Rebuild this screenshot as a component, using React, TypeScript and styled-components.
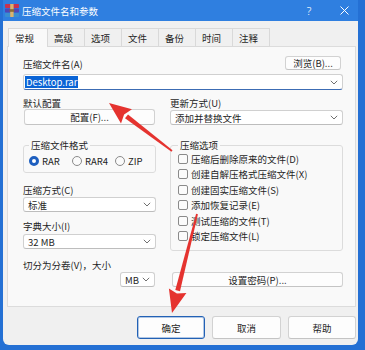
import React from 'react';
import styled, { createGlobalStyle } from 'styled-components';

const GlobalStyle = createGlobalStyle`
  html, body {
    margin: 0;
    padding: 0;
  }
  body {
    width: 365px;
    height: 350px;
    overflow: hidden;
    background: #2470d4;
    font-family: "Noto Sans CJK SC", "Noto Sans", sans-serif;
    font-size: 9.5px;
    color: #1f1f1f;
  }
  * {
    box-sizing: border-box;
  }
`;

const Desktop = styled.div`
  position: relative;
  width: 365px;
  height: 350px;
  padding-left: 3px;
`;

const Window = styled.div`
  width: 355px;
  height: 345px;
  display: flex;
  flex-direction: column;
  border-radius: 0 0 6px 6px;
  overflow: hidden;
  background: #f0f0f0;
`;

const TitleBar = styled.div`
  height: 21px;
  flex-shrink: 0;
  display: flex;
  align-items: center;
  padding-left: 2px;
  background: #2f7fe0;
  color: #fff;
`;

const Title = styled.div`
  flex: 1;
  margin-left: 3px;
  font-size: 9.5px;
  line-height: 12px;
`;

const HelpMark = styled.div`
  width: 22px;
  margin-right: 10px;
  text-align: center;
  font-family: "Noto Sans", sans-serif;
  font-size: 11px;
  font-weight: 300;
`;

const CloseMark = styled.div`
  width: 28px;
  display: flex;
  justify-content: center;
`;

const Body = styled.div`
  flex: 1;
  display: flex;
  flex-direction: column;
  padding: 7px 2px 0 4px;
`;

const Tabs = styled.div`
  display: flex;
  height: 19px;
  margin-left: 1px;
  margin-bottom: -1px;
  position: relative;
  z-index: 1;
`;

const Tab = styled.div<{ $active?: boolean; $w: number }>`
  width: ${p => p.$w}px;
  margin-left: -1px;
  padding-left: 6px;
  display: flex;
  align-items: center;
  border: 1px solid #d9d9d9;
  border-bottom: ${p => (p.$active ? 'none' : '1px solid #d9d9d9')};
  background: ${p => (p.$active ? '#f9f9f9' : '#f0f0f0')};
  &:first-child {
    margin-left: 0;
  }
`;

const Panel = styled.div`
  height: 261px;
  flex-shrink: 0;
  border: 1px solid #dcdcdc;
  background: #f9f9f9;
  padding: 0 12px 0 15px;
`;

const TopRow = styled.div`
  display: flex;
  justify-content: space-between;
  align-items: flex-end;
  padding-top: 9px;
`;

const Label = styled.div<{ $mt?: number }>`
  line-height: 12px;
  margin-top: ${p => p.$mt ?? 0}px;
  white-space: nowrap;
`;

const Button = styled.div<{ $w?: number; $h: number; $mt?: number; $ml?: number; $mr?: number }>`
  width: ${p => (p.$w ? `${p.$w}px` : 'auto')};
  height: ${p => p.$h}px;
  margin: ${p => p.$mt ?? 0}px ${p => p.$mr ?? 0}px 0 ${p => p.$ml ?? 0}px;
  display: flex;
  align-items: center;
  justify-content: center;
  background: #fdfdfd;
  border: 1px solid #d2d2d2;
  border-bottom-color: #c4c4c4;
  border-radius: 3px;
  white-space: nowrap;
`;

const DefaultButton = styled(Button)`
  border: 1px solid #2261b5;
  box-shadow: inset 0 0 0 1px rgba(34, 97, 181, 0.35);
`;

const Combo = styled.div<{ $h: number; $mt?: number; $w?: number; $focus?: boolean; $end?: boolean }>`
  height: ${p => p.$h}px;
  width: ${p => (p.$w ? `${p.$w}px` : 'auto')};
  margin-top: ${p => p.$mt ?? 0}px;
  margin-right: ${p => (p.$end ? 1 : 0)}px;
  align-self: ${p => (p.$end ? 'flex-end' : 'stretch')};
  display: flex;
  align-items: center;
  justify-content: space-between;
  padding: 0 4px 0 ${p => (p.$focus ? 1 : 4)}px;
  background: #ffffff;
  border: 1px solid #d0d0d0;
  border-bottom-color: ${p => (p.$focus ? '#3c6cb4' : '#bdbdbd')};
  border-radius: 3px;
  white-space: nowrap;
`;

const Selected = styled.span`
  background: #0a64d6;
  color: #fff;
  padding: 0 1px;
  line-height: 12px;
`;

const Columns = styled.div`
  display: grid;
  grid-template-columns: 133px 173px;
  column-gap: 14px;
`;

const Column = styled.div`
  display: flex;
  flex-direction: column;
`;

const Group = styled.fieldset<{ $mt: number; $pl: number }>`
  margin: ${p => p.$mt}px 0 0 0;
  padding: 0 0 6px ${p => p.$pl}px;
  border: 1px solid #dcdcdc;
  border-radius: 3px;
  min-width: 0;
`;

const Legend = styled.legend`
  margin-left: 0;
  padding: 0 2px;
  line-height: 12px;
`;

const RadioRow = styled.div`
  display: grid;
  grid-template-columns: 43px 43px 40px;
  height: 12px;
  margin-top: 3px;
`;

const RadioItem = styled.div`
  display: flex;
  align-items: center;
  gap: 3px;
`;

const Radio = styled.span<{ $on?: boolean }>`
  width: 10px;
  height: 10px;
  border-radius: 50%;
  background: ${p => (p.$on ? '#ffffff' : '#fafafa')};
  border: ${p => (p.$on ? '3px solid #1e5fbf' : '1px solid #8a8a8a')};
`;

const CheckRow = styled.div`
  height: 15.5px;
  display: flex;
  align-items: center;
  gap: 3px;
  white-space: nowrap;
`;

const Check = styled.span`
  width: 10px;
  height: 10px;
  flex-shrink: 0;
  border: 1px solid #8a8a8a;
  border-radius: 2px;
  background: #fbfbfb;
`;

const Footer = styled.div`
  display: flex;
  justify-content: flex-end;
  gap: 7px;
  margin-top: 9px;
`;

const Overlay = styled.svg`
  position: absolute;
  left: 0;
  top: 0;
  pointer-events: none;
`;

const Chevron = () => (
  <svg width="8" height="5" viewBox="0 0 8 5">
    <path d="M0.8 0.8 L4 4 L7.2 0.8" fill="none" stroke="#606060" strokeWidth="0.9" />
  </svg>
);

const RarIcon = () => (
  <svg width="14" height="13" viewBox="0 0 14 13">
    <rect x="0" y="0" width="14" height="4" rx="0.8" fill="#c8324f" />
    <rect x="0" y="4.5" width="14" height="4" rx="0.8" fill="#5146b4" />
    <rect x="0" y="9" width="14" height="4" rx="0.8" fill="#3a8fd0" />
    <rect x="5.2" y="0" width="3.4" height="13" fill="#d9b46e" />
    <rect x="4.6" y="5.2" width="4.6" height="2.6" fill="#8a6a36" />
  </svg>
);

type Pt = [number, number];

const Arrow = ({ from, to, head = 20, half = 8 }: { from: Pt; to: Pt; head?: number; half?: number }) => {
  const dx = to[0] - from[0];
  const dy = to[1] - from[1];
  const len = Math.hypot(dx, dy);
  const ux = dx / len;
  const uy = dy / len;
  const nx = -uy;
  const ny = ux;
  const bx = to[0] - ux * head;
  const by = to[1] - uy * head;
  const pts = (list: number[][]) => list.map(p => `${p[0].toFixed(1)},${p[1].toFixed(1)}`).join(' ');
  const shaft = pts([
    [from[0] + nx * 0.9, from[1] + ny * 0.9],
    [bx + nx * 2.4, by + ny * 2.4],
    [bx - nx * 2.4, by - ny * 2.4],
    [from[0] - nx * 0.9, from[1] - ny * 0.9],
  ]);
  const tip = pts([
    [to[0], to[1]],
    [bx + nx * half, by + ny * half],
    [bx + ux * 3, by + uy * 3],
    [bx - nx * half, by - ny * half],
  ]);
  return (
    <g fill="#e5332f">
      <polygon points={shaft} />
      <polygon points={tip} />
    </g>
  );
};

const tabs = ['常规', '高级', '选项', '文件', '备份', '时间', '注释'];
const options = [
  '压缩后删除原来的文件(D)',
  '创建自解压格式压缩文件(X)',
  '创建固实压缩文件(S)',
  '添加恢复记录(E)',
  '测试压缩的文件(T)',
  '锁定压缩文件(L)',
];

const App = () => {
  return (
    <Desktop>
      <GlobalStyle />
      <Window>
        <TitleBar>
          <RarIcon />
          <Title>压缩文件名和参数</Title>
          <HelpMark>?</HelpMark>
          <CloseMark>
            <svg width="9" height="9" viewBox="0 0 9 9">
              <path d="M0.5 0.5 L8.5 8.5 M8.5 0.5 L0.5 8.5" stroke="#fff" strokeWidth="1" />
            </svg>
          </CloseMark>
        </TitleBar>
        <Body>
          <Tabs>
            {tabs.map((t, i) => (
              <Tab key={t} $active={i === 0} $w={i === 0 ? 40 : 38}>
                {t}
              </Tab>
            ))}
          </Tabs>
          <Panel>
            <TopRow>
              <Label>压缩文件名(A)</Label>
              <Button $w={56} $h={14} $mr={2}>浏览(B)...</Button>
            </TopRow>
            <Combo $h={16} $mt={4} $focus>
              <Selected>Desktop.rar</Selected>
              <Chevron />
            </Combo>
            <Columns>
              <Column>
                <Label $mt={7}>默认配置</Label>
                <Button $h={16} $ml={1} $mr={1}>配置(F)...</Button>
                <Group $mt={14} $pl={5}>
                  <Legend>压缩文件格式</Legend>
                  <RadioRow>
                    <RadioItem><Radio $on />RAR</RadioItem>
                    <RadioItem><Radio />RAR4</RadioItem>
                    <RadioItem><Radio />ZIP</RadioItem>
                  </RadioRow>
                </Group>
                <Label $mt={11}>压缩方式(C)</Label>
                <Combo $h={15} $mt={1}>
                  标准
                  <Chevron />
                </Combo>
                <Label $mt={8}>字典大小(I)</Label>
                <Combo $h={15} $mt={2}>
                  32 MB
                  <Chevron />
                </Combo>
                <Label $mt={10}>切分为分卷(V)，大小</Label>
                <Combo $h={15} $mt={1} $w={35} $end>
                  MB
                  <Chevron />
                </Combo>
              </Column>
              <Column>
                <Label $mt={7}>更新方式(U)</Label>
                <Combo $h={15} $mt={1}>
                  添加并替换文件
                  <Chevron />
                </Combo>
                <Group $mt={14} $pl={7}>
                  <Legend>压缩选项</Legend>
                  {options.map(o => (
                    <CheckRow key={o}>
                      <Check />
                      {o}
                    </CheckRow>
                  ))}
                </Group>
                <Button $h={15} $mt={21} $ml={2}>设置密码(P)...</Button>
              </Column>
            </Columns>
          </Panel>
          <Footer>
            <DefaultButton $w={68} $h={23}>确定</DefaultButton>
            <Button $w={69} $h={23}>取消</Button>
            <Button $w={68} $h={23}>帮助</Button>
          </Footer>
        </Body>
      </Window>
      <Overlay width="365" height="350" viewBox="0 0 365 350">
        <Arrow from={[172, 151]} to={[109, 103]} head={22} half={9} />
        <Arrow from={[197, 214]} to={[172, 313]} head={23} half={9} />
      </Overlay>
    </Desktop>
  );
};

export default App;
